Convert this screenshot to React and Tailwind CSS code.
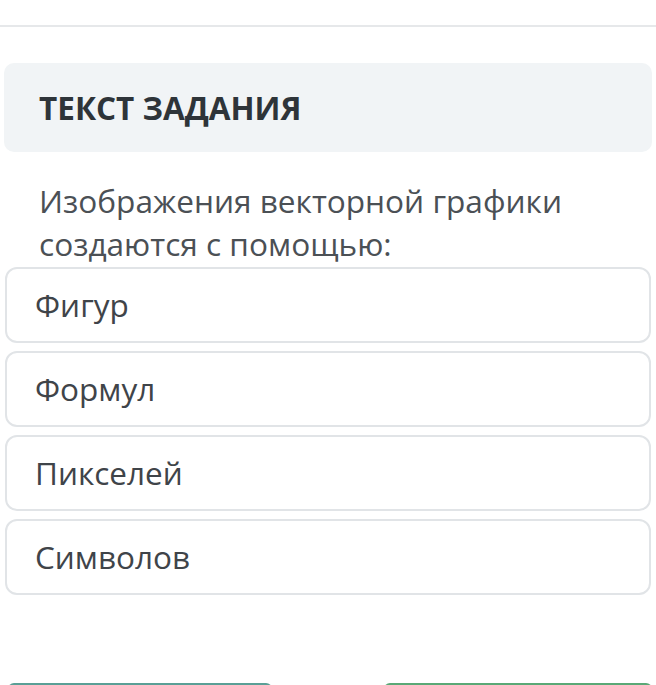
export default function App() {
  const options = ["Фигур", "Формул", "Пикселей", "Символов"];
  return (
    <div className="w-[656px] bg-white" style={{ fontFamily: '"Open Sans", "Noto Sans", sans-serif' }}>
      <div className="h-[25px]" />
      <div className="h-[2px] bg-[#e6e8ea]" />
      <div className="h-[36px]" />
      <div className="mx-[4px] h-[89px] rounded-[10px] bg-[#f1f4f6] flex items-center px-[35px]">
        <span className="text-[31.5px] font-bold text-[#2e3439]">ТЕКСТ ЗАДАНИЯ</span>
      </div>
      <div className="px-[39px] pt-[27px] pb-[2px] text-[31.6px] leading-[43px] text-[#4b5055]">
        Изображения векторной графики создаются с помощью:
      </div>
      <div className="mx-[5px] flex flex-col gap-[8px]">
        {options.map((o) => (
          <div key={o} className="h-[76px] rounded-[12px] border-2 border-[#e1e4e7] flex items-center px-[28px] text-[31.5px] text-[#3f4449]">
            {o}
          </div>
        ))}
      </div>
      <div className="h-[88px]" />
      <div className="flex justify-between px-[8px] pr-[4px]">
        <div className="w-[264px] h-[50px] rounded-[6px] bg-[#5a9f96]" />
        <div className="w-[268px] h-[50px] rounded-[6px] bg-[#5aa876]" />
      </div>
    </div>
  );
}
